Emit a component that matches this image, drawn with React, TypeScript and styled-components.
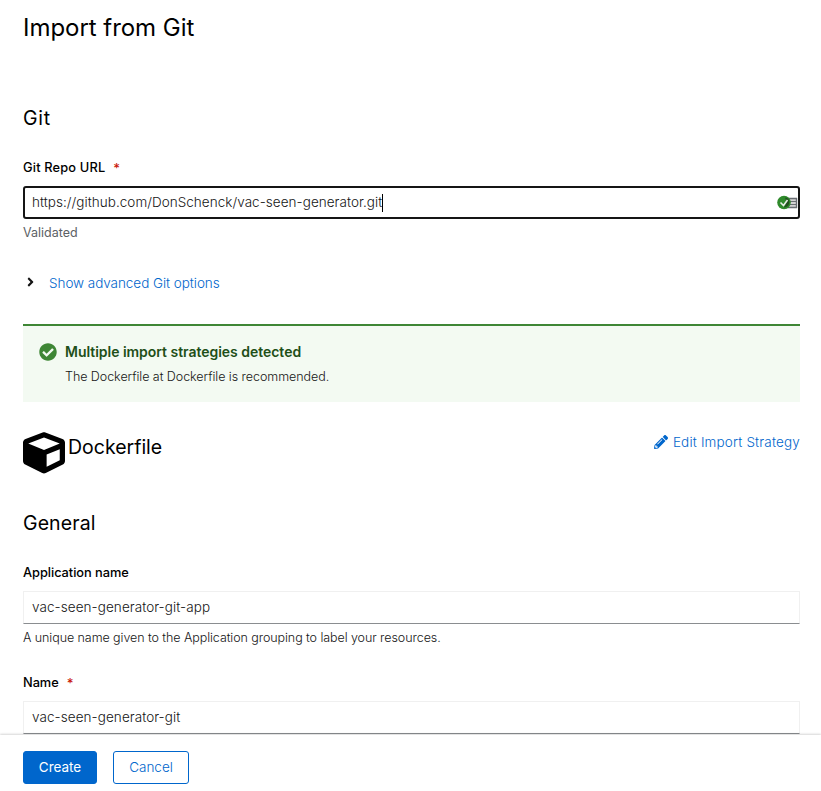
import React from 'react';
import styled, { createGlobalStyle } from 'styled-components';
import { FaAngleRight, FaCheckCircle, FaCube, FaPencilAlt } from 'react-icons/fa';

const GlobalStyle = createGlobalStyle`
  * { box-sizing: border-box; }
  body {
    margin: 0;
    background: #fff;
    color: #151515;
    font-family: Inter, "Open Sans", sans-serif;
    overflow: hidden;
  }
`;

const Page = styled.div`
  display: flex;
  flex-direction: column;
  height: 791px;
  overflow: hidden;
`;

const Form = styled.main`
  flex: none;
  height: 735px;
  padding: 10px 21px 0 23px;
  overflow: hidden;
`;

const Title = styled.h1`
  margin: 0 0 58px;
  font-size: 24px;
  font-weight: 400;
  line-height: 36px;
  letter-spacing: -0.04px;
  color: #000;
`;

const SectionTitle = styled.h2<{ $spacing?: number }>`
  margin: 0;
  font-size: 19.5px;
  font-weight: 400;
  line-height: 28px;
  letter-spacing: ${(p) => p.$spacing ?? 0}px;
  color: #000;
`;

const Field = styled.div<{ $top: number }>`
  margin-top: ${(p) => p.$top}px;
`;

const Label = styled.label<{ $spacing?: number }>`
  display: flex;
  gap: 8px;
  height: 21px;
  padding-top: 1px;
  margin-bottom: 8px;
  font-size: 12.8px;
  font-weight: 500;
  line-height: 20px;
  letter-spacing: ${(p) => p.$spacing ?? 0}px;
  color: #000;
`;

const Required = styled.span`
  color: #c9190b;
  font-size: 13px;
`;

const Control = styled.div<{ $focused?: boolean }>`
  display: flex;
  align-items: center;
  height: 33px;
  padding: 0 ${(p) => (p.$focused ? 0 : 8)}px 0 ${(p) => (p.$focused ? 7 : 8)}px;
  border: ${(p) => (p.$focused ? '2px solid #151515' : '1px solid #f0f0f0')};
  border-bottom-color: ${(p) => (p.$focused ? '#151515' : '#8a8d90')};
  border-radius: ${(p) => (p.$focused ? 3 : 0)}px;
`;

const Value = styled.span<{ $spacing: number }>`
  padding-bottom: 2px;
  font-size: 13.5px;
  font-weight: 300;
  letter-spacing: ${(p) => p.$spacing}px;
  white-space: nowrap;
`;

const Caret = styled.span`
  width: 1px;
  height: 18px;
  background: #000;
`;

const StatusIcon = styled.svg`
  flex: none;
  margin-left: auto;
  width: 21px;
  height: 16px;
`;

const Helper = styled.div<{ $spacing: number; $muted?: boolean }>`
  height: 20px;
  margin-top: 4px;
  font-size: 12.5px;
  font-weight: ${(p) => (p.$muted ? 400 : 300)};
  line-height: 20px;
  letter-spacing: ${(p) => p.$spacing}px;
  color: ${(p) => (p.$muted ? '#5c6165' : '#151515')};
  white-space: nowrap;
`;

const Toggle = styled.div`
  display: flex;
  align-items: center;
  gap: 12px;
  height: 24px;
  margin-top: 28px;
  padding-left: 1px;
  svg { width: 13px; height: 14px; margin-top: -2px; }
`;

const LinkText = styled.span<{ $spacing: number }>`
  font-size: 13.5px;
  font-weight: 300;
  letter-spacing: ${(p) => p.$spacing}px;
  color: #06c;
`;

const Alert = styled.section`
  display: flex;
  gap: 8px;
  height: 78px;
  margin-top: 29px;
  padding: 15px 16px 0;
  border-top: 2px solid #3e8635;
  background: #f3faf2;
  > svg { flex: none; width: 18px; height: 18px; margin-top: 2px; color: #3e8635; }
`;

const AlertTitle = styled.h4`
  margin: 0 0 5px;
  font-size: 14px;
  font-weight: 600;
  line-height: 21px;
  letter-spacing: -0.03px;
  color: #1e4f18;
`;

const AlertBody = styled.div`
  font-size: 12.5px;
  font-weight: 300;
  line-height: 20px;
  letter-spacing: -0.05px;
`;

const Strategy = styled.div`
  display: flex;
  align-items: flex-start;
  height: 42px;
  margin-top: 30px;
  > svg { width: 42px; height: 42px; margin-right: 3px; color: #000; }
  > h2 { padding-top: 1px; }
`;

const EditLink = styled.div`
  display: flex;
  align-items: center;
  gap: 5px;
  height: 20px;
  margin-left: auto;
  color: #06c;
  svg { width: 14px; height: 14px; }
`;

const General = styled.div`
  margin-top: 35px;
`;

const Footer = styled.footer`
  position: relative;
  display: flex;
  flex: 1;
  gap: 16px;
  padding: 16px 23px;
  background: #fff;
  box-shadow: 0 -1px 2px rgba(3, 3, 3, 0.16);
`;

const Button = styled.button<{ $primary?: boolean }>`
  width: ${(p) => (p.$primary ? 74 : 76)}px;
  height: 33px;
  padding: 0 0 2px;
  border: 1px solid #06c;
  border-radius: 3px;
  background: ${(p) => (p.$primary ? '#06c' : '#fff')};
  color: ${(p) => (p.$primary ? '#fff' : '#06c')};
  font-family: inherit;
  font-size: 13.5px;
  font-weight: ${(p) => (p.$primary ? 400 : 300)};
`;

const ValidatedMenuIcon = () => (
  <StatusIcon viewBox="0 0 21 16">
    <path d="M9 3h11v10H9z" fill="#d2d2d2" />
    <path d="M9 3.5h11M9 12.5h11M19.5 3v10" fill="none" stroke="#6a6e73" strokeWidth="1.4" />
    <path d="M12 6.5h7M12 9.5h7" stroke="#6a6e73" strokeWidth="1.2" />
    <circle cx="7" cy="7.5" r="6.8" fill="#2f8a2b" />
    <path d="M8 2.5c6 0 6 10-1 10 2-3 3-6 1-10z" fill="#234f20" />
    <path d="M3.5 7.5l3 3 4-5.5" fill="none" stroke="#e6eee5" strokeWidth="1.6" />
  </StatusIcon>
);

export default function App() {
  return (
    <Page>
      <GlobalStyle />
      <Form>
        <Title>Import from Git</Title>
        <SectionTitle $spacing={0.8}>Git</SectionTitle>
        <Field $top={25}>
          <Label $spacing={0.17}>Git Repo URL <Required>*</Required></Label>
          <Control $focused>
            <Value $spacing={0.04}>https://github.com/DonSchenck/vac-seen-generator.git</Value>
            <Caret />
            <ValidatedMenuIcon />
          </Control>
          <Helper $spacing={0} $muted>Validated</Helper>
        </Field>
        <Toggle>
          <FaAngleRight />
          <LinkText $spacing={-0.05}>Show advanced Git options</LinkText>
        </Toggle>
        <Alert>
          <FaCheckCircle />
          <div>
            <AlertTitle>Multiple import strategies detected</AlertTitle>
            <AlertBody>The Dockerfile at Dockerfile is recommended.</AlertBody>
          </div>
        </Alert>
        <Strategy>
          <FaCube />
          <SectionTitle $spacing={0}>Dockerfile</SectionTitle>
          <EditLink>
            <FaPencilAlt />
            <LinkText $spacing={0.17}>Edit Import Strategy</LinkText>
          </EditLink>
        </Strategy>
        <General>
          <SectionTitle $spacing={0.1}>General</SectionTitle>
          <Field $top={25}>
            <Label $spacing={-0.04}>Application name</Label>
            <Control><Value $spacing={0.07}>vac-seen-generator-git-app</Value></Control>
            <Helper $spacing={-0.07}>A unique name given to the Application grouping to label your resources.</Helper>
          </Field>
          <Field $top={24}>
            <Label $spacing={-0.04}>Name <Required>*</Required></Label>
            <Control><Value $spacing={0.07}>vac-seen-generator-git</Value></Control>
          </Field>
        </General>
      </Form>
      <Footer>
        <Button $primary>Create</Button>
        <Button>Cancel</Button>
      </Footer>
    </Page>
  );
}
